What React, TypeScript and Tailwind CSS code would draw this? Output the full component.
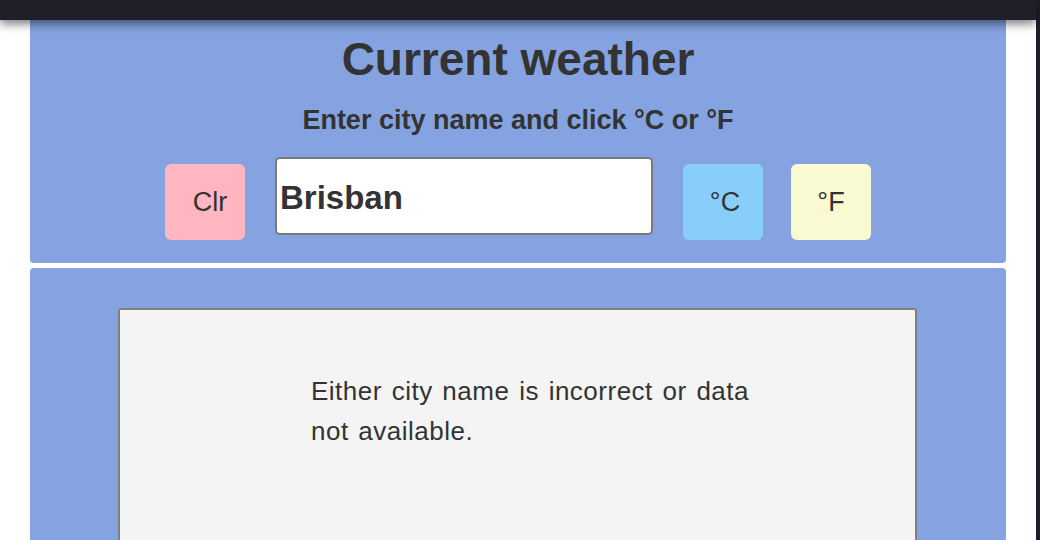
import React from "react";

export default function App() {
  const font = { fontFamily: '"Liberation Sans", Arial, Helvetica, sans-serif' };
  return (
    <div className="relative flex w-[1040px] h-[540px] overflow-hidden bg-white text-[#333333]" style={font}>
      <div className="flex flex-1 flex-col">
        <div className="relative z-10 h-[20px] shrink-0 bg-[#1e1f28] shadow-[0_4px_10px_rgba(0,0,0,0.5)]" />
        <div className="flex w-[1006px] flex-col pl-[30px]">
          <div className="flex h-[243px] flex-col items-center rounded-b-[4px] bg-[#84a3e0] pt-[16px]">
            <h1 className="text-[46px] font-bold leading-[46px]">Current weather</h1>
            <p className="mt-[25px] text-[27px] font-bold leading-[27px]">Enter city name and click °C or °F</p>
            <div className="mt-[23px] flex items-start">
              <button className="mt-[7px] flex h-[76px] w-[80px] items-center justify-center rounded-[6px] bg-[#ffb6c1] pl-[10px] text-[27px]">
                Clr
              </button>
              <div className="ml-[30px] flex h-[78px] w-[378px] items-center rounded-[5px] border-2 border-[#7a7a7a] bg-white pl-[3px] pt-[4px] text-[33px] font-bold">
                Brisban
              </div>
              <button className="ml-[30px] mt-[7px] flex h-[76px] w-[80px] items-center justify-center rounded-[6px] bg-[#87cefa] pl-[4px] text-[27px]">
                °C
              </button>
              <button className="ml-[28px] mt-[7px] flex h-[76px] w-[80px] items-center justify-center rounded-[6px] bg-[#fafad2] text-[27px]">
                °F
              </button>
            </div>
          </div>
          <div className="mt-[5px] h-[300px] rounded-t-[4px] bg-[#84a3e0] pt-[40px]">
            <div className="ml-[88px] h-[300px] w-[799px] rounded-[3px] border-2 border-[#808080] bg-[#f4f4f4] pl-[191px] pt-[61px]">
              <p className="w-[470px] text-[26px] leading-[40px] tracking-[0.5px] [word-spacing:2px]">
                Either city name is incorrect or data not available.
              </p>
            </div>
          </div>
        </div>
      </div>
      <div className="w-[4px] bg-[#1c1f2a]" />
    </div>
  );
}
